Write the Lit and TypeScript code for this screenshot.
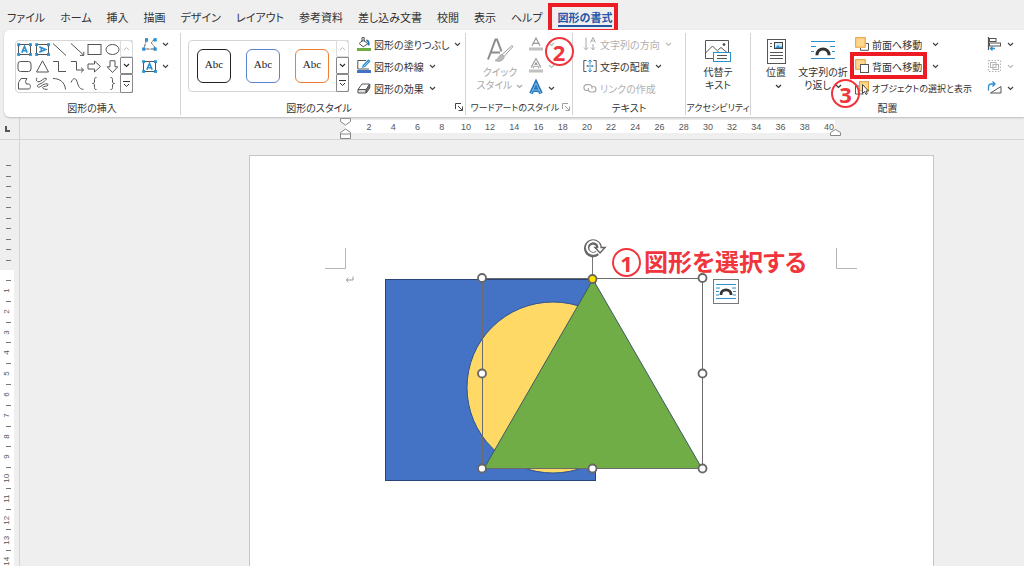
import { LitElement, html, svg, css, TemplateResult } from "lit";
import { customElement, property } from "lit/decorators.js";
import { classMap } from "lit/directives/class-map.js";

const BLUE = "#2b8fd0";

const draw = (w: number, h: number, body: TemplateResult) =>
  html`<svg width=${w} height=${h} viewBox="0 0 ${w} ${h}" fill="none" stroke="#555" aria-hidden="true">${body}</svg>`;

const chevron = html`<svg class="chev" width="7" height="5" viewBox="0 0 7 5" fill="none" stroke="currentColor" stroke-width="1.2" aria-hidden="true"><path d="M1 1l2.5 2.4L6 1" /></svg>`;

const corners = (x1: number, y1: number, x2: number, y2: number) => svg`
  <g fill=${BLUE} stroke="none">
    <rect x=${x1 - 1.4} y=${y1 - 1.4} width="2.9" height="2.9" /><rect x=${x2 - 1.4} y=${y1 - 1.4} width="2.9" height="2.9" />
    <rect x=${x1 - 1.4} y=${y2 - 1.4} width="2.9" height="2.9" /><rect x=${x2 - 1.4} y=${y2 - 1.4} width="2.9" height="2.9" />
  </g>`;

const arch = svg`<path d="M7 15.2v-.6a6 5.6 0 0 1 12 0v.6" stroke="#333" stroke-width="3" />`;

const shapes: [string, TemplateResult][] = [
  ["テキスト ボックス", svg`<rect x="1.5" y="1.5" width="12" height="10" />${corners(1.6, 1.6, 13.4, 11.4)}<path d="M4.8 9.7L7.5 3.4l2.7 6.3M5.8 7.7h3.4" stroke=${BLUE} stroke-width="1.6" />`],
  ["縦書きテキスト ボックス", svg`<rect x="1.5" y="1.5" width="12" height="10" />${corners(1.6, 1.6, 13.4, 11.4)}<path d="M4.3 3.8l6.3 2.7-6.3 2.7M6.3 4.8v3.4" stroke=${BLUE} stroke-width="1.6" />`],
  ["線", svg`<path d="M1 .5l13 12" />`],
  ["線矢印", svg`<path d="M1 .5l12.5 11.5M13.8 8.8v3.6H10" />`],
  ["正方形/長方形", svg`<rect x="1" y="1.5" width="13" height="10" />`],
  ["楕円", svg`<ellipse cx="7.5" cy="6.5" rx="6.5" ry="5" />`],
  ["四角形: 角を丸くする", svg`<rect x="1" y="1.5" width="13" height="10" rx="2.5" />`],
  ["二等辺三角形", svg`<path d="M7.5 .8L13.5 12h-12z" />`],
  ["コネクタ: カギ線", svg`<path d="M1 1.5h5.5v10H14" />`],
  ["コネクタ: カギ線矢印", svg`<path d="M1 1.5h5.5v8.5h7M11 7.5l2.6 2.5-2.6 2.5" />`],
  ["矢印: 右", svg`<path d="M1 4h6.5V1l6 5.5-6 5.5V9H1z" />`],
  ["矢印: 下", svg`<path d="M5 .8h5v6h2.8L7.5 12.5 2.2 6.8H5z" />`],
  ["フリーフォーム: 図形", svg`<path d="M1.5 12V5.5L4 1.5h6L8.5 4.3 9.3 7h2.6c2 0 2 5 0 5z" />`],
  ["フリーフォーム: フリーハンド", svg`<path d="M1.800 .8C.8 3.500 1.800 5.200 4 4.800S9.500 .5 11 1.200 9 5 6 6.500 1.800 8 2.500 9.500 5 10 7.500 8.200s6-2 5.500-.2-5 .8-5.200 2.500 3 2 4.700 1.800" />`],
  ["円弧", svg`<path d="M1 1.5c7 0 12 4 12.5 11" />`],
  ["曲線", svg`<path d="M1 5.5C3.5 0 6 .5 7.5 6s4 6.500 6 6.300" />`],
  ["左中かっこ", svg`<path d="M9.5 .5C7 .5 7.500 2 7.500 4S7 6.500 5.500 6.500C7 6.500 7.500 7 7.500 9s-.5 3.500 2 3.500" />`],
  ["右中かっこ", svg`<path d="M5.500 .5C8 .5 7.500 2 7.500 4S8 6.500 9.500 6.500C8 6.500 7.500 7 7.500 9s.5 3.500-2 3.500" />`],
];

const icons = {
  editShape: draw(15, 13, svg`<path d="M4.500 2L1.800 11h11M13 2C9 3 9 5 10.500 6.500S13 9 13 11" stroke-dasharray="3 1" />${corners(4.500, 1.800, 13, 1.800)}${corners(1.800, 11, 13, 11)}`),
  textBox: draw(15, 13, svg`<rect x="1.5" y="1.5" width="12" height="10" />${corners(1.6, 1.6, 13.4, 11.4)}<path d="M4.800 9.700L7.500 3.400l2.700 6.300M5.800 7.700h3.400" stroke=${BLUE} stroke-width="1.600" />`),
  fill: draw(14, 15, svg`<rect x="0" y="11" width="14" height="3" fill="#70ad47" stroke="none" /><path d="M6.200 2.800l4.600 4-4.600 3-4-3.300z" fill="#fff" /><path d="M5 5V.500h2.200V5" /><path d="M9.300 3.400c2 .2 2.800 2 2.300 5" stroke="#1f6fb5" stroke-width="1.800" />`),
  outline: draw(14, 15, svg`<rect x="0" y="11" width="14" height="3" fill="#4472c4" stroke="none" /><path d="M9 1.500H.8V10H12" /><path d="M4.800 9l1-3L11.300.300l2.200 2L8 8z" fill=${BLUE} stroke="none" /><path d="M6.500 7.500l5-5" stroke="#bfe0f5" stroke-width=".8" />`),
  effects: draw(14, 15, svg`<path d="M1 8.500L5 3h7.500L9.300 8.500z" fill="#fff" /><path d="M1 8.500v3.500h8V8.500z" fill="#ddd" /><path d="M9.300 8.500L12.800 3v4L9.300 12z" fill="#777" />`),
  quick: draw(28, 28, svg`<path d="M2 22.500L9.500 2.500h1.500l4.500 12M5 15.500h9" stroke="#8c8c8c" stroke-width="2" /><path d="M27 9.500L18 19.500l-2-1.800 9.800-9z" fill="#fff" stroke="#999" /><path d="M16 17.500c-3 0-3 4-7 6 4 2 9 0 9.200-4z" fill="#bbb" stroke="#aaa" />`),
  textFill: draw(14, 14, svg`<path d="M3 8.800L7 1l4 7.800M4.300 6.300h5.400" stroke="#999" stroke-width="1.200" /><rect y="10.500" width="14" height="3" fill="#c0c0c0" stroke="none" />`),
  textOutline: draw(14, 14, svg`<path d="M3 8.800L7 1.500l4 7.300M4.300 6.300h5.400" stroke="#999" stroke-width="3" /><path d="M3.200 8.800L7 1.500l3.800 7.300M4.500 6.300h5" stroke="#fff" stroke-width="1" /><rect y="10.500" width="14" height="3" fill="#c0c0c0" stroke="none" />`),
  textEffect: draw(14, 14, svg`<path d="M2 12.500L7 2l5 10.500M3.800 9h6.400" stroke="#2276bd" stroke-width="3.800" /><path d="M2.200 12.500L7 2l4.800 10.500M4 9h6" stroke="#9fd2f0" stroke-width=".8" />`),
  direction: draw(14, 14, svg`<g stroke="#aaa"><path d="M3 .5v12M1 10.500l2 2.300 2-2.300M10 7v6M8 10.500l2 2.300 2-2.300" /><path d="M7.500 5.500L10 .5l2.500 5M8.500 4h3" /></g>`),
  align: draw(14, 14, svg`<path d="M3.500 1.500H.8v11h2.700M10.500 1.500h2.700v11h-2.700M3.500 7H5.500M8.500 7h2" /><path d="M7 1v4.500M7 8.500V13M5.300 2.700L7 1l1.700 1.700M5.300 11.300L7 13l1.700-1.700M4 7h6" stroke=${BLUE} />`),
  link: draw(14, 14, svg`<g stroke="#aaa" stroke-width="1.200"><path d="M5 9.500H3.800a2.900 2.900 0 0 1 0-5.800h2.400a2.900 2.900 0 0 1 2.600 4" /><path d="M9.200 5.500h1a2.700 2.700 0 0 1 0 5.500H8a2.800 2.800 0 0 1-2.500-4" /></g>`),
  altText: draw(28, 25, svg`<path d="M10 19.500H1.500v-18h23v12M1.500 14l7-7 9 9M14 11l3-2.500 6 5" /><circle cx="20" cy="5.500" r="1" fill="#444" /><rect x="9.500" y="13.500" width="17" height="9" fill="#fff" stroke=${BLUE} /><path d="M13 16.500h10M13 19.500h10" />`),
  position: draw(19, 25, svg`<rect x=".5" y=".5" width="18" height="24" /><path d="M3 4.500h2M3 7.500h2M3 13.500h13M3 16.500h13M3 19.500h13" stroke-width="1" /><rect x="7.500" y="3.500" width="8" height="6" fill="#d6ebf8" stroke="#444" /><path d="M8 9l3-3 2 2 1-1 1.500 2z" fill=${BLUE} stroke="none" />`),
  wrap: draw(26, 22, svg`<path d="M1 1.500h24M1 6.500h5M20 6.500h5M1 11.500h3M22 11.500h3M1 18.500h24" stroke=${BLUE} stroke-width="1.200" />${arch}`),
  forward: draw(14, 14, svg`<path d="M11 6.500h2.500v6.800H5.500V11" /><rect x=".7" y=".7" width="9.500" height="9.500" fill="#ffd88f" stroke="#e59a35" />`),
  backward: draw(14, 14, svg`<rect x=".7" y=".7" width="9.500" height="9.500" fill="#ffd88f" stroke="#e59a35" /><rect x="5.500" y="5.500" width="8" height="8" fill="#fff" />`),
  selection: draw(14, 14, svg`<path d="M4 5H.5v8h8" /><rect x="4.500" y=".7" width="9" height="9" fill="#ffd88f" stroke="#e59a35" /><path d="M7.500 3.500v9l2-2 1.500 3 1.300-.7-1.300-2.800h2.500z" fill="#fff" stroke="#333" stroke-width=".9" />`),
  alignObj: draw(15, 14, svg`<path d="M1.500 0v13" stroke-width="1.200" /><rect x="2.500" y="1.500" width="6.500" height="3" /><rect x="2.500" y="6" width="11" height="3" /><path d="M8 11.500H3.500M5.500 9.500l-2 2 2 2" stroke=${BLUE} stroke-width="1.300" />`),
  groupObj: draw(15, 14, svg`<g stroke="#b5b5b5"><rect x="1.500" y="1.500" width="12" height="11" stroke-dasharray="1.500 1.500" /><rect x="3.500" y="3.500" width="5.500" height="5" /><rect x="6" y="5.500" width="5.500" height="5" /></g>`),
  rotateObj: draw(15, 14, svg`<path d="M14 5.500v6.500H3.500z" /><path d="M1.500 9.500V6c0-2 1-3 3-3h3M5.500 .5L8 3 5.500 5.500" stroke=${BLUE} stroke-width="1.300" />`),
};

const base = css`
  * { box-sizing: border-box; }
  svg { display: block; flex: none; overflow: visible; }
  button { font: inherit; color: inherit; background: none; border: 0; padding: 0; margin: 0; }
`;

@customElement("ribbon-item")
class RibbonItem extends LitElement {
  @property({ attribute: false }) icon?: TemplateResult;
  @property() label = "";
  @property() hint = "";
  @property({ type: Boolean }) menu = false;
  @property({ type: Boolean }) wide = false;
  @property({ type: Boolean }) compact = false;
  @property({ type: Boolean }) disabled = false;
  @property({ type: Boolean }) marked = false;

  static styles = [base, css`
    :host { display: flex; align-items: center; height: 22px; }
    button { position: relative; display: flex; align-items: center; gap: 5px; height: 22px; white-space: nowrap; }
    .wide { gap: 10px; }
    .compact { font-size: 9px; }
    .name { display: flex; align-items: center; gap: 3px; }
    button:disabled { color: #b0b0b0; }
    .chev { color: #444; }
    button:disabled .chev { color: #bbb; }
    .mark { position: absolute; left: -5px; top: -3px; width: 77px; height: 27px; border: 4px solid #ed1c24; }
  `];

  render() {
    return html`<button class=${classMap({ wide: this.wide, compact: this.compact })} ?disabled=${this.disabled} aria-label=${this.label || this.hint}>
      <span class="name">${this.icon}${this.label ? html`<span>${this.label}</span>` : ""}</span>
      ${this.menu ? chevron : ""}${this.marked ? html`<span class="mark"></span>` : ""}
    </button>`;
  }
}

@customElement("gallery-scroll")
class GalleryScroll extends LitElement {
  static styles = [base, css`
    :host { display: grid; grid-template-rows: 17px 17px 1fr; width: 13px; margin: -1px; }
    button { display: grid; place-items: center; border: 1px solid #888; color: #333; border-radius: 1px; }
    button:disabled { border-color: #ddd; color: #bbb; }
  `];
  render() {
    return html`
      <button disabled aria-label="上へ"><svg width="7" height="5" viewBox="0 0 7 5" fill="none" stroke="currentColor"><path d="M1 4l2.500-2.400L6 4" /></svg></button>
      <button aria-label="下へ">${chevron}</button>
      <button aria-label="その他"><svg width="7" height="8" viewBox="0 0 7 8" fill="none" stroke="currentColor"><path d="M0 1.500h7M1 4l2.500 2.500L6 4" /></svg></button>`;
  }
}

@customElement("ribbon-group")
class RibbonGroup extends LitElement {
  @property() label = "";
  @property({ type: Boolean }) launcher = false;
  @property({ type: Boolean }) muted = false;
  @property({ type: Boolean }) compact = false;
  static styles = [base, css`
    :host { display: flex; flex-direction: column; min-width: 0; border-right: 1px solid #d4d4d4; }
    :host(:last-child) { border-right: 0; }
    .body { display: flex; height: 66px; }
    .foot { display: flex; align-items: center; height: 16px; white-space: nowrap; padding: 0 2px; }
    .label { flex: 1; display: flex; justify-content: center; min-width: 0; }
    .compact { font-size: 9px; }
    .muted { opacity: .5; }
  `];
  render() {
    return html`<div class="body"><slot></slot></div>
      <div class="foot"><span class=${classMap({ label: true, compact: this.compact })}>${this.label}</span>
      ${this.launcher ? html`<button class=${classMap({ muted: this.muted })} aria-label="${this.label}の詳細">${draw(8, 8, svg`<path d="M.5 6V.500H6M3 3l4 4M7.500 3.500v4h-4" stroke="#444" />`)}</button>` : ""}</div>`;
  }
}

@customElement("document-page")
class DocumentPage extends LitElement {
  static styles = [base, css`
    :host { display: block; position: relative; background: #fff; border: 1px solid #c6c6c6; border-bottom: 0; overflow: hidden; }
    .drawing { position: absolute; left: -1px; top: -1px; }
    .step { position: absolute; left: 362px; top: 92px; display: flex; align-items: center; gap: 3px; margin: 0; color: #f0353c; font-size: 24px; line-height: 28px; font-weight: 700; white-space: nowrap; }
    .caption { margin-top: -4px; }
    .ring { display: grid; place-items: center; width: 29px; height: 29px; border: 2px solid #f0353c; border-radius: 50%; font-family: "Noto Sans", sans-serif; font-size: 22px; font-weight: 700; line-height: 22px; }
    .layout { position: absolute; left: 463px; top: 123px; width: 26px; height: 25px; display: grid; place-items: center; background: #fff; border: 1px solid #777; }
  `];

  render() {
    const handles = [[482, 278], [702.5, 278], [482, 373.5], [702.5, 373.5], [482, 468.5], [592.5, 468.5], [702.5, 468.5]];
    return html`
      <svg class="drawing" width="685" height="411" viewBox="249 155 685 411" fill="none" role="img" aria-label="長方形、円、三角形">
        <path d="M325 268.500h20.500V248M857 268.500h-20.500V248" stroke="#b5b5b5" />
        <path d="M353 276.500v3.500h-6.500M348.500 277.800l-2.300 2.200 2.300 2.200" stroke="#999" />
        <rect x="385.500" y="279.500" width="210" height="201" fill="#4472c4" stroke="#2a4478" />
        <ellipse cx="553" cy="387.500" rx="86" ry="85.500" fill="#ffd966" stroke="#2f528f" />
        <path d="M593 279.500L702 468.500H484z" fill="#70ad47" stroke="#3d5a63" />
        <rect x="482.500" y="278.500" width="220" height="190" stroke="#6b6b6b" />
        <path d="M592.500 257v21" stroke="#777" />
        <path d="M597.200 253A6.300 6.300 0 1 1 599.300 248.500" stroke="#666" stroke-width="5.400" />
        <path d="M595 247.500h10l-5 5.500z" fill="#fff" stroke="#666" stroke-width="1.500" />
        <path d="M597 252.500A6.300 6.300 0 1 1 599.300 249" stroke="#fff" stroke-width="2" />
        ${handles.map(([x, y]) => svg`<circle cx=${x} cy=${y} r="4" fill="#fff" stroke="#666" stroke-width="1.800" />`)}
        <circle cx="592.500" cy="279" r="4" fill="#ffe100" stroke="#666" stroke-width="1.800" />
      </svg>
      <p class="step"><span class="ring">1</span><span class="caption">図形を選択する</span></p>
      <button class="layout" aria-label="レイアウト オプション">
        ${draw(20, 17, svg`<path d="M0 1.500h20M0 5h4M16 5h4M0 8.500h3M17 8.500h3M0 12h3M17 12h3M0 15.500h20" stroke=${BLUE} /><path d="M5 12v-.7a5 4.500 0 0 1 10 0v.7" stroke="#333" stroke-width="2.800" />`)}
      </button>`;
  }
}

@customElement("app-root")
class AppRoot extends LitElement {
  static styles = [base, css`
    :host { display: flex; flex-direction: column; height: 100vh; overflow: hidden; background: #efefef; color: #333; font: 11px/13px "Noto Sans CJK JP", sans-serif; font-feature-settings: "palt"; }
    .tabs { display: flex; gap: 15px; height: 30px; padding: 8px 7px 0; flex: none; }
    .tab { position: relative; height: 19px; line-height: 18px; color: inherit; text-decoration: none; white-space: nowrap; }
    .active { color: #2456a8; font-weight: 700; border-bottom: 2px solid #2456a8; }
    .tabmark { position: absolute; left: -10px; top: -5px; right: -6px; height: 30px; border: 4px solid #ed1c24; }
    .ring { position: absolute; z-index: 2; display: grid; place-items: center; width: 29px; height: 29px; border: 2px solid #f0353c; border-radius: 50%; color: #f0353c; font-family: "Noto Sans", sans-serif; font-size: 22px; font-weight: 700; line-height: 22px; }
    .two { left: -13px; top: 29px; }
    .three { left: -24px; top: 46px; }
    .ribbon { display: grid; grid-template-columns: 177px 285px 107px 113px 65px 1fr; flex: none; margin-left: 4px; padding: 3px 0 4px; height: 87px; background: #fff; border-radius: 6px 0 0 6px; box-shadow: 0 1px 2px #bbb; position: relative; z-index: 1; font-size: 10px; }
    .shapes { display: flex; flex: none; width: 118px; height: 53px; margin: 7px 9px 0 11px; border: 1px solid #d5d5d5; border-radius: 4px; }
    .cells { flex: 1; display: grid; grid-template-columns: repeat(6, 1fr); grid-template-rows: repeat(3, 1fr); place-items: center; }
    .rows { display: flex; flex-direction: column; }
    .styles { display: flex; flex: none; width: 161px; height: 52px; margin: 7px 8px 0 7px; border: 1px solid #d5d5d5; border-radius: 4px; }
    .samples { flex: 1; display: flex; justify-content: center; align-items: center; gap: 15px; }
    .sample { width: 34px; height: 34px; border: 1px solid #222; border-radius: 6px; font-family: "Liberation Serif", serif; font-size: 11px; padding-bottom: 4px; color: #222; }
    .blue { border-color: #5b84cf; }
    .orange { border-color: #ed7d31; }
    .big { display: flex; flex-direction: column; align-items: center; white-space: nowrap; padding-top: 4px; flex: none; }
    .pic { display: grid; place-items: center; height: 28px; }
    .lines { text-align: center; }
    .lines .chev { display: inline-block; vertical-align: middle; margin-left: 4px; }
    .big:disabled { color: #aaa; }
    .quick { width: 58px; margin-left: 5px; }
    .text { margin-left: 10px; }
    .ribbon .full { flex: 1; }
    .place { width: 34px; margin-left: 8px; }
    .wrap { width: 54px; margin-left: 3px; }
    .order { position: relative; margin-left: 5px; width: 132px; flex: none; }
    .hruler { display: grid; grid-template-columns: 20px 1fr; flex: none; height: 23px; border-bottom: 1px solid #d4d4d4; }
    .stop { border-right: 1px solid #d4d4d4; padding: 9px 0 0 5px; }
    .scale { position: relative; margin: 3px 0 0 325px; width: 490px; height: 13px; background: #fff; }
    .nums { display: grid; grid-template-columns: repeat(20, 1fr); width: 484px; margin-left: 12px; font: 9px/14px "Liberation Sans", sans-serif; color: #555; text-align: center; }
    .first { position: absolute; left: -5px; top: -2px; }
    .last { position: absolute; left: 485px; top: 9px; }
    .work { flex: 1; min-height: 0; display: grid; grid-template-columns: 20px 1fr; }
    .vruler { border-right: 1px solid #d4d4d4; padding-top: 25px; }
    .above { display: grid; grid-template-rows: repeat(10, 1fr); height: 105px; }
    .tick { width: 5px; margin-left: 6px; border-top: 1px solid #777; }
    .below { display: grid; grid-template-rows: repeat(14, 1fr); width: 14px; height: 301px; padding-top: 10px; background: #fff; }
    .mark { display: grid; grid-template-rows: 1px 1fr; }
    .num { writing-mode: vertical-rl; transform: rotate(180deg); font: 8px/14px "Liberation Sans", sans-serif; text-align: center; color: #555; }
    .desk { display: grid; grid-template-columns: 685px; padding: 15px 0 0 229px; min-height: 0; }
  `];

  private tabs = ["ファイル", "ホーム", "挿入", "描画", "デザイン", "レイアウト", "参考資料", "差し込み文書", "校閲", "表示", "ヘルプ", "図形の書式"];

  render() {
    return html`
      <nav class="tabs">
        ${this.tabs.map((t, i) => {
          const on = i === this.tabs.length - 1;
          return html`<a href="#" class=${classMap({ tab: true, active: on })}>${t}${on ? html`<span class="tabmark"></span><span class="ring two">2</span>` : ""}</a>`;
        })}
      </nav>
      <section class="ribbon">
        <ribbon-group label="図形の挿入">
          <div class="shapes">
            <div class="cells">${shapes.map(([n, s]) => html`<button aria-label=${n}>${draw(15, 13, s)}</button>`)}</div>
            <gallery-scroll></gallery-scroll>
          </div>
          <div class="rows">
            <ribbon-item .icon=${icons.editShape} hint="図形の編集" menu></ribbon-item>
            <ribbon-item .icon=${icons.textBox} hint="テキスト ボックス" menu></ribbon-item>
          </div>
        </ribbon-group>
        <ribbon-group label="図形のスタイル" launcher>
          <div class="styles">
            <div class="samples">
              ${["", "blue", "orange"].map((c) => html`<button class="sample ${c}">Abc</button>`)}
            </div>
            <gallery-scroll></gallery-scroll>
          </div>
          <div class="rows">
            <ribbon-item .icon=${icons.fill} label="図形の塗りつぶし" menu></ribbon-item>
            <ribbon-item .icon=${icons.outline} label="図形の枠線" menu></ribbon-item>
            <ribbon-item .icon=${icons.effects} label="図形の効果" menu></ribbon-item>
          </div>
        </ribbon-group>
        <ribbon-group label="ワードアートのスタイル" launcher muted compact>
          <button class="big quick" disabled><span class="pic">${icons.quick}</span><span class="lines">クイック<br />スタイル${chevron}</span></button>
          <div class="rows">
            <ribbon-item .icon=${icons.textFill} hint="文字の塗りつぶし" menu disabled></ribbon-item>
            <ribbon-item .icon=${icons.textOutline} hint="文字の輪郭" menu disabled></ribbon-item>
            <ribbon-item .icon=${icons.textEffect} hint="文字の効果" menu></ribbon-item>
          </div>
        </ribbon-group>
        <ribbon-group label="テキスト">
          <div class="rows text">
            <ribbon-item .icon=${icons.direction} label="文字列の方向" menu disabled></ribbon-item>
            <ribbon-item .icon=${icons.align} label="文字の配置" menu></ribbon-item>
            <ribbon-item .icon=${icons.link} label="リンクの作成" disabled></ribbon-item>
          </div>
        </ribbon-group>
        <ribbon-group label="アクセシビリティ" compact>
          <button class="big full"><span class="pic">${icons.altText}</span><span class="lines">代替テ<br />キスト</span></button>
        </ribbon-group>
        <ribbon-group label="配置">
          <button class="big place"><span class="pic">${icons.position}</span><span class="lines">位置<br />${chevron}</span></button>
          <button class="big wrap"><span class="pic">${icons.wrap}</span><span class="lines">文字列の折<br />り返し${chevron}</span></button>
          <div class="rows order">
            <ribbon-item .icon=${icons.forward} label="前面へ移動" menu wide></ribbon-item>
            <ribbon-item .icon=${icons.backward} label="背面へ移動" menu wide marked></ribbon-item>
            <ribbon-item .icon=${icons.selection} label="オブジェクトの選択と表示" compact></ribbon-item>
            <span class="ring three">3</span>
          </div>
          <div class="rows">
            <ribbon-item .icon=${icons.alignObj} hint="配置" menu></ribbon-item>
            <ribbon-item .icon=${icons.groupObj} hint="グループ化" menu disabled></ribbon-item>
            <ribbon-item .icon=${icons.rotateObj} hint="回転" menu></ribbon-item>
          </div>
        </ribbon-group>
      </section>
      <div class="hruler">
        <div class="stop">${draw(5, 6, svg`<path d="M1 0v5h4" stroke-width="2" />`)}</div>
        <div class="scale">
          <div class="nums">${Array.from({ length: 20 }, (_, i) => html`<span>${(i + 1) * 2}</span>`)}</div>
          <svg class="first" width="11" height="22" viewBox="0 0 11 22" fill="#fff" stroke="#888"><path d="M.5 .5h10v3l-5 3.500-5-3.500zM.5 20.500v-6l5-3.500 5 3.500v6zM.5 16h10" /></svg>
          <svg class="last" width="11" height="7" viewBox="0 0 11 7" fill="#fff" stroke="#888"><path d="M.5 6.500v-3l5-3 5 3v3z" /></svg>
        </div>
      </div>
      <main class="work">
        <div class="vruler">
          <div class="above">${Array.from({ length: 10 }, () => html`<span class="tick"></span>`)}</div>
          <div class="below">${Array.from({ length: 14 }, (_, i) => html`<div class="mark"><span class="tick"></span><span class="num">${i + 1}</span></div>`)}</div>
        </div>
        <div class="desk"><document-page></document-page></div>
      </main>`;
  }
}
